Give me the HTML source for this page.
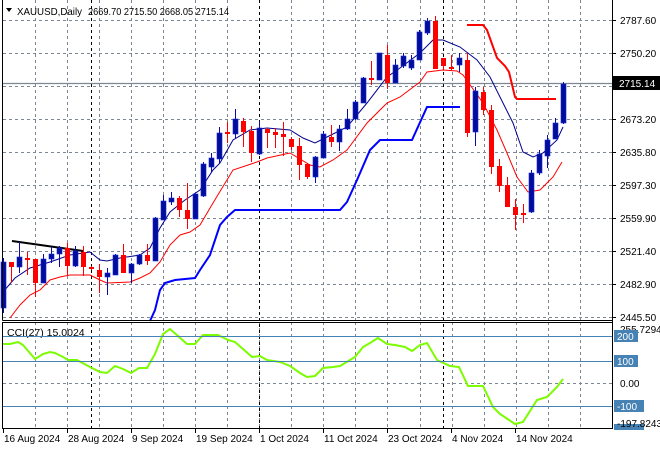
<!DOCTYPE html>
<html><head><meta charset="utf-8"><style>
html,body{margin:0;padding:0;background:#fff;width:660px;height:450px;overflow:hidden}
svg{display:block;font-family:"Liberation Sans",sans-serif}
</style></head><body>
<svg id="s" width="660" height="450" xmlns="http://www.w3.org/2000/svg">
<rect width="660" height="450" fill="#fff"/>
<g id="grid" stroke="#7c8793" stroke-width="1" stroke-dasharray="3,3"></g>
<g id="sep" stroke="#000" stroke-width="1" stroke-dasharray="3,3">
<line x1="91.5" y1="0" x2="91.5" y2="428"/><line x1="259.5" y1="0" x2="259.5" y2="428"/><line x1="443.5" y1="0" x2="443.5" y2="428"/>
</g>
<line x1="3" y1="83.5" x2="612" y2="83.5" stroke="#7c8793" stroke-width="1.2"/>
<g id="lines" fill="none"></g>
<g id="candles"></g>
<g id="cci" fill="none"></g>
<g stroke="#000" stroke-width="1" fill="none">
<line x1="2.5" y1="0" x2="2.5" y2="320.5"/>
<line x1="2.5" y1="320.5" x2="612.5" y2="320.5"/>
<line x1="612.5" y1="0" x2="612.5" y2="428.5"/>
<rect x="2.5" y="322.5" width="610" height="106"/>
</g>
<g font-size="10.5" fill="#000">
<path d="M6 8 L12 8 L9 12 Z" fill="#000"/>
<text x="17" y="15" textLength="65" lengthAdjust="spacingAndGlyphs">XAUUSD,Daily</text>
<text x="88" y="15" textLength="141" lengthAdjust="spacingAndGlyphs">2669.70 2715.50 2668.05 2715.14</text>
<text x="7" y="336">CCI(27) 15.0024</text>
</g>
<g id="axis" font-size="10" fill="#000"></g>
</svg>
<script>
var NS="http://www.w3.org/2000/svg";
function el(p,t,a,txt){var e=document.createElementNS(NS,t);for(var k in a)e.setAttribute(k,a[k]);if(txt!=null)e.textContent=txt;document.getElementById(p).appendChild(e);return e;}
var gx=[35,67,99,131,163,195,227,259,291,323,355,387,420,452,484,516,548,580];
gx.forEach(function(x){el("grid","line",{x1:x+.5,y1:0,x2:x+.5,y2:320});el("grid","line",{x1:x+.5,y1:322,x2:x+.5,y2:428});});
var gy=[20,53,86,119,152,185,218,251,284,317];
gy.forEach(function(y){el("grid","line",{x1:3,y1:y+.5,x2:612,y2:y+.5});});
el("grid","line",{x1:3,y1:383.5,x2:612,y2:383.5});
var pl=[["2787.60",20],["2750.20",53],["2673.20",119],["2635.80",152],["2597.30",185],["2559.90",218],["2521.40",251],["2482.90",284],["2445.50",317]];
pl.forEach(function(p){el("axis","line",{x1:612,y1:p[1]+.5,x2:616,y2:p[1]+.5,stroke:"#000"});el("axis","text",{x:620,y:p[1]+4},p[0]);});
el("axis","rect",{x:613,y:76,width:47,height:14,fill:"#000"});
el("axis","text",{x:619,y:87,fill:"#fff"},"2715.14");
[[336,"200"],[361,"100"],[406,"-100"]].forEach(function(l){el("axis","line",{x1:3,y1:l[0]+.5,x2:612,y2:l[0]+.5,stroke:"#4682b4"});});
el("axis","text",{x:620,y:333},"255.7294");
[[336,"200"],[361,"100"],[406,"-100"]].forEach(function(l){el("axis","rect",{x:614,y:l[0]-6,width:l[1].length*6+6,height:12,fill:"#4682b4"});el("axis","text",{x:617,y:l[0]+4,fill:"#fff"},l[1]);});
el("axis","text",{x:620,y:387},"0.00");
el("axis","rect",{x:614,y:424,width:30,height:6,fill:"#4682b4"});
el("axis","text",{x:617,y:427},"-197.8243");
[["16 Aug 2024",3],["28 Aug 2024",67],["9 Sep 2024",131],["19 Sep 2024",195],["1 Oct 2024",259],["11 Oct 2024",323],["23 Oct 2024",387],["4 Nov 2024",451],["14 Nov 2024",515]].forEach(function(d){el("axis","line",{x1:d[1]+.5,y1:428,x2:d[1]+.5,y2:433,stroke:"#000"});el("axis","text",{x:d[1]+1,y:442},d[0]);});
function pl2(pts,c,w){el("lines","polyline",{points:pts.map(function(p){return p.join(",")}).join(" "),stroke:c,"stroke-width":w,fill:"none"});}
pl2([[3,292],[15,278],[30,268],[50,262],[70,255],[90,252],[100,260],[107,261],[120,258],[140,255],[150,248],[160,228],[170,212],[185,200],[200,190],[213,170],[220,163],[233,140],[250,130],[267,128],[290,130],[303,138],[315,143],[327,137],[347,127],[367,103],[387,77],[400,68],[420,53],[433,40],[443,40],[460,47],[477,60],[490,77],[500,97],[513,123],[523,152],[533,157],[543,153],[557,140],[563,127]],"#00008b",1);
pl2([[10,318],[20,305],[30,295],[40,290],[50,280],[60,277],[70,275],[90,275],[100,280],[107,283],[130,282],[140,278],[150,273],[160,262],[170,245],[180,235],[190,232],[200,225],[213,203],[233,170],[257,162],[267,158],[290,153],[310,165],[320,167],[333,160],[347,150],[367,123],[387,103],[400,97],[420,82],[427,72],[443,70],[457,71],[463,75],[483,103],[497,130],[507,153],[517,177],[528,192],[540,190],[553,177],[562,162]],"#ff0000",1);
pl2([[150,321],[155,310],[160,290],[165,283],[175,280],[195,278],[200,270],[210,255],[215,240],[220,225],[227,217],[235,210],[340,210],[347,202],[357,180],[370,150],[380,140],[412,140],[427,107],[460,107]],"#0000ff",2);
pl2([[467,25],[483,25],[487,30],[497,58],[505,66],[509,72],[515,97],[517,99],[556,99]],"#ff0000",2);
pl2([[12,241],[83,251]],"#000",2);
var C=[
["b",262,308,258,313],["r",262,267,262,283],["b",257,267,242,273],["r",258,260,252,275],["r",259,283,259,297],["b",259,283,254,283],["b",254,259,247,263],["b",248,254,246,267],["r",248,266,243,276],["b",251,266,246,267],
["r",252,267,246,276],["r",267,269,266,270],["r",270,277,264,293],["b",273,277,268,295],["b",255,275,254,275],["r",255,273,244,273],["b",264,273,263,283],["b",255,264,254,265],["r",255,261,244,265],["b",218,261,217,261],
["b",201,220,195,220],["b",198,202,192,205],["r",198,210,196,217],["r",210,219,183,229],["b",194,219,194,219],["b",164,196,162,197],["b",158,167,153,172],["b",133,159,127,163],["r",132,134,122,143],["b",119,134,109,138],
["r",121,132,118,147],["r",131,153,126,162],["b",128,154,121,155],["r",129,133,128,148],["r",132,135,128,148],["r",134,137,122,156],["r",139,147,137,150],["r",146,165,138,180],["r",164,177,163,179],["b",157,177,156,183],
["b",134,158,131,158],["r",137,142,125,147],["b",129,142,125,151],["b",119,129,109,130],["b",102,119,100,120],["b",78,103,77,103],["r",78,80,61,85],["b",53,80,53,80],["r",55,83,45,89],["b",65,83,59,83],
["b",56,66,53,68],["b",60,68,55,70],["b",32,60,30,60],["b",21,33,18,35],["r",21,69,16,69],["r",58,66,58,70],["r",67,69,55,70],["b",58,65,53,72],["r",60,133,53,137],["b",91,132,87,146],
["r",92,110,87,115],["r",110,167,105,174],["r",166,186,159,192],["r",185,207,177,207],["r",207,215,199,230],["r",213,215,204,223],["b",173,212,170,213],["b",154,173,150,175],["b",140,156,135,168],["b",123,139,118,139],
["b",84,123,82,124]];
C.forEach(function(c,i){var x=3.5+8*i;var col=c[0]=="b"?"#0a0aa8":"#ff0000";
el("candles","line",{x1:x,y1:c[3],x2:x,y2:c[4],stroke:col,"stroke-width":1});
var h=Math.max(c[2]-c[1],2);el("candles","rect",{x:x-2.5,y:c[1],width:5,height:h,fill:c[0]=="b"?"#000c9c":"#ff0000",stroke:c[0]=="b"?"#1a2ad0":"none","stroke-width":.6});});
var cc=[[3,344],[10,344],[18,342],[23,345],[35,359],[43,354],[50,352],[55,353],[63,357],[68,360],[77,360],[90,367],[100,372],[107,373],[115,366],[123,369],[131,373],[139,368],[147,368],[155,354],[163,334],[170,329],[178,336],[187,344],[195,344],[203,335],[218,335],[228,340],[235,342],[243,349],[252,357],[260,356],[267,360],[280,362],[290,366],[300,373],[307,377],[315,376],[323,368],[333,367],[340,366],[355,357],[363,347],[370,343],[378,338],[387,344],[395,345],[405,347],[412,351],[420,345],[427,343],[437,360],[450,366],[459,367],[468,386],[483,386],[493,407],[500,414],[515,424],[523,422],[537,400],[547,397],[557,387],[563,379]];
el("cci","polyline",{points:cc.map(function(p){return p.join(",")}).join(" "),stroke:"#7cfc00","stroke-width":2,fill:"none"});
</script>
</body></html>
